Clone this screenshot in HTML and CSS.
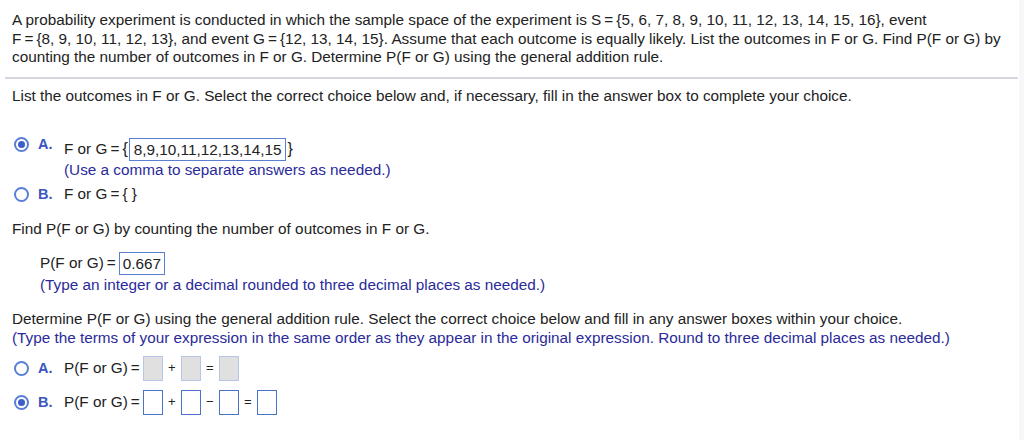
FILE: index.html
```html
<!DOCTYPE html>
<html>
<head>
<meta charset="utf-8">
<link rel="stylesheet" href="styles.css">
</head>
<body>
<div class="page">
  <div class="stem">
    <p>A probability experiment is conducted in which the sample space of the experiment is S&#8239;=&#8239;{5,&nbsp;6,&nbsp;7,&nbsp;8,&nbsp;9,&nbsp;10,&nbsp;11,&nbsp;12,&nbsp;13,&nbsp;14,&nbsp;15,&nbsp;16}, event F&#8239;=&#8239;{8,&nbsp;9,&nbsp;10,&nbsp;11,&nbsp;12,&nbsp;13}, and event G&#8239;=&#8239;{12,&nbsp;13,&nbsp;14,&nbsp;15}. Assume that each outcome is equally likely. List the outcomes in F or G. Find P(F or G) by counting the number of outcomes in F or G. Determine P(F or G) using the general addition rule.</p>
  </div>
  <div class="work">
    <p class="instr">List the outcomes in F or G. Select the correct choice below and, if necessary, fill in the answer box to complete your choice.</p>

    <div class="choices choices-1">
      <div class="choice">
        <span class="radio on"></span><span class="letter">A.</span>
        <div class="body">
          <div class="line">F or G&#8239;=&#8239;<span class="brace">{</span><span class="ans">8,9,10,11,12,13,14,15</span><span class="brace">}</span></div>
          <div class="hint">(Use a comma to separate answers as needed.)</div>
        </div>
      </div>
      <div class="choice">
        <span class="radio"></span><span class="letter">B.</span>
        <div class="body"><div class="line">F or G&#8239;=&#8239;{ }</div></div>
      </div>
    </div>

    <p class="instr find">Find P(F or G) by counting the number of outcomes in F or G.</p>
    <div class="indent">
      <div class="line">P(F or G)&#8239;=&#8239;<span class="ans num">0.667</span></div>
      <div class="hint">(Type an integer or a decimal rounded to three decimal places as needed.)</div>
    </div>

    <p class="instr det">Determine P(F or G) using the general addition rule. Select the correct choice below and fill in any answer boxes within your choice.</p>
    <div class="hint">(Type the terms of your expression in the same order as they appear in the original expression. Round to three decimal places as needed.)</div>

    <div class="choices choices-2">
      <div class="choice">
        <span class="radio"></span><span class="letter">A.</span>
        <div class="body"><div class="line">P(F or G)&#8239;=&#8239;<span class="box off"></span><span class="op">+</span><span class="box off"></span><span class="op">=</span><span class="box off"></span></div></div>
      </div>
      <div class="choice">
        <span class="radio on"></span><span class="letter">B.</span>
        <div class="body"><div class="line">P(F or G)&#8239;=&#8239;<span class="box"></span><span class="op">+</span><span class="box"></span><span class="op">&minus;</span><span class="box"></span><span class="op">=</span><span class="box"></span></div></div>
      </div>
    </div>
  </div>
</div>
</body>
</html>
```
FILE: styles.css
```css
html, body {
  margin: 0;
  padding: 0;
  background: #f7f7f7;
}
body {
  font-family: "Liberation Sans", Arial, sans-serif;
  font-size: 15.3px;
  color: #222;
  line-height: 18.5px;
}
.page {
  width: 1019px;
  height: 440px;
  box-sizing: border-box;
  background: #fff;
  padding: 11px 0 0 0;
}
p { margin: 0; }
.stem {
  padding: 0 0 10px 12px;
  border-bottom: 2px solid #d6d6de;
  margin-left: 5px;
  margin-right: 1px;
}
.stem p { margin-left: -5px; }
.work {
  padding: 8px 0 0 12px;
}
.choices-1 {
  margin-top: 30px;
}
.choice {
  display: flex;
  align-items: flex-start;
}
.radio {
  width: 11px;
  height: 11px;
  border: 2px solid #5a7fd6;
  border-radius: 50%;
  box-sizing: content-box;
  margin: 2px 0 0 2px;
  flex: none;
  position: relative;
  background: #fff;
}
.radio.on::after {
  content: "";
  position: absolute;
  left: 2px;
  top: 2px;
  width: 7px;
  height: 7px;
  border-radius: 50%;
  background: #3a5fc8;
}
.letter {
  color: #3b55c0;
  font-weight: bold;
  width: 26px;
  margin-left: 9px;
  flex: none;
  font-size: 14.5px;
}
.body .line { white-space: nowrap; }
.choices-1 .choice:first-child .body { margin-top: 3px; }
.choices-1 .choice + .choice { margin-top: 5px; }
.brace { font-size: 16px; }
.ans {
  display: inline-block;
  border: 1px solid #5b7fd0;
  padding: 2px 3px 1px 3px;
  line-height: 18px;
  margin: 0 1px;
}
.choices-1 .ans { padding: 2px 4px 1px 4px; }
.hint {
  color: #2a2a9a;
}
.find { margin-top: 17px; }
.indent {
  padding-left: 28px;
  margin-top: 13px;
}
.indent .hint { margin-top: 1px; }
.ans.num { margin: 0; }
.det { margin-top: 16px; }
.choices-2 { margin-top: 9px; }
.choices-2 .choice { align-items: center; }
.choices-2 .choice + .choice { margin-top: 9px; }
.choices-2 .radio { margin-top: 0; }
.line { display: flex; align-items: center; }
.box {
  display: inline-block;
  width: 18px;
  height: 23px;
  border: 1px solid #4a72c8;
  background: #fff;
}
.box.off {
  background: #e0e0e0;
  border-color: #b7c6e6;
}
.op {
  display: inline-block;
  width: 18px;
  text-align: center;
  font-size: 13px;
}
```
